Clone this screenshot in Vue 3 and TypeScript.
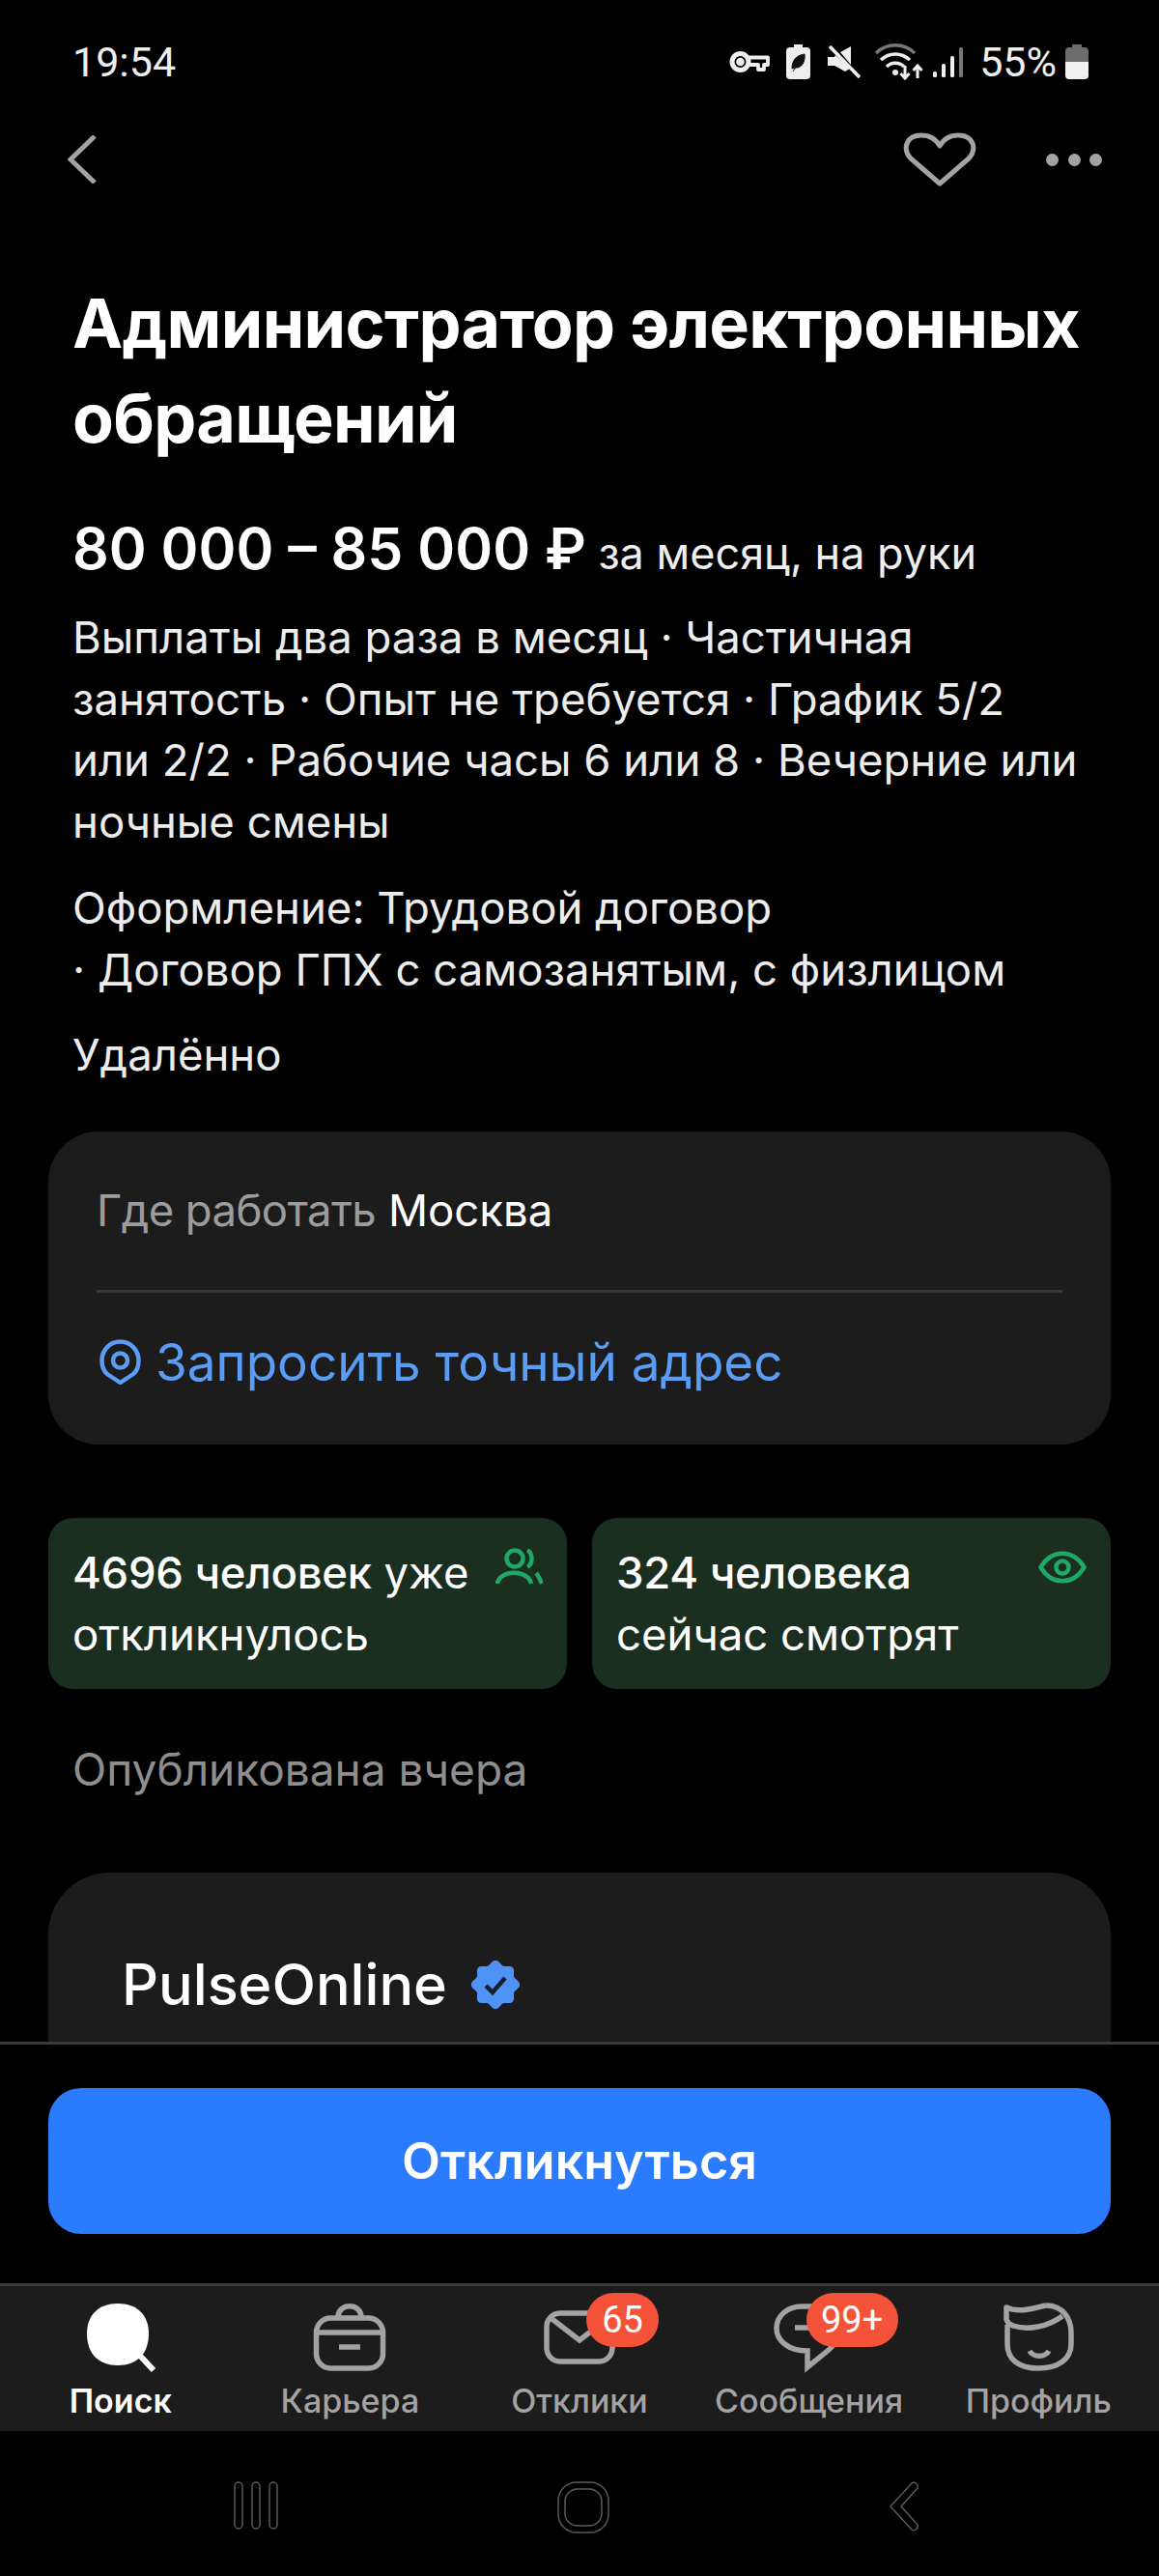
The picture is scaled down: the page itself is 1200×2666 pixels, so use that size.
<script setup lang="ts">
const badgePoints: string = Array.from({ length: 96 }, (_, i) => {
  const a = (i / 96) * Math.PI * 2
  const r = 23 + 2.2 * Math.cos(a * 8)
  return `${(25 + r * Math.sin(a)).toFixed(2)},${(25 - r * Math.cos(a)).toFixed(2)}`
}).join(' ')
</script>

<template>
  <div class="phone">
    <div class="status">
      <span class="time">19:54</span>
      <div class="status-right">
        <svg class="si key" width="42" height="24" viewBox="0 0 42 24" fill="none" stroke="#eee" stroke-width="5">
          <circle cx="11.500" cy="12" r="8.500" />
          <circle cx="11.500" cy="12" r="1.800" fill="#eee" />
          <path d="M20 7.500H40V15H36V20H30V15H20" stroke-width="3.800" stroke-linejoin="round" />
        </svg>
        <svg class="si leaf" width="25" height="36" viewBox="0 0 25 36">
          <path d="M8 0H17V3H21Q25 3 25 7V32Q25 36 21 36H4Q0 36 0 32V7Q0 3 4 3H8Z" fill="#eee" />
          <path d="M6 25C6 15 12 11 19 10C20 18 16 25 9 24ZM7 28L14 17" fill="#111" stroke="#111" stroke-width="1" />
        </svg>
        <svg class="si mute" width="34" height="34" viewBox="0 0 34 34">
          <path d="M0 12H7L8 10L23 24L18 27L7 21H0ZM13 7L24 1V20Z" fill="#eee" />
          <path d="M2 1L33 33" stroke="#eee" stroke-width="3.600" />
        </svg>
        <svg class="si wifi" width="50" height="38" viewBox="0 0 50 38" fill="none">
          <path d="M1 10C12 -1 30 -1 41 10" stroke="#777" stroke-width="3.400" />
          <path d="M6 17C15 9 27 9 36 17" stroke="#eee" stroke-width="3.400" />
          <path d="M12 24C17 19 25 19 30 24" stroke="#eee" stroke-width="3.400" />
          <circle cx="21" cy="30" r="3" fill="#eee" />
          <path d="M31 23V36M26.500 31L31 36L35.500 31M44 36V24M39.500 28L44 23L48.500 28" stroke="#eee" stroke-width="3" />
        </svg>
        <svg class="si signal" width="31" height="33" viewBox="0 0 31 33">
          <rect x="0" y="26" width="4" height="6" rx="1.500" fill="#eee" />
          <rect x="9" y="18" width="4" height="14" rx="1.500" fill="#eee" />
          <rect x="18" y="10" width="4" height="22" rx="1.500" fill="#eee" />
          <rect x="27" y="1" width="4" height="31" rx="1.500" fill="#777" />
        </svg>
        <span class="pct">55%</span>
        <svg class="si batt" width="24" height="36" viewBox="0 0 24 36">
          <path d="M7 0H17V3H20Q24 3 24 7V18H0V7Q0 3 4 3H7Z" fill="#6d6d6d" />
          <path d="M0 18H24V32Q24 36 20 36H4Q0 36 0 32Z" fill="#f0f0f0" />
        </svg>
      </div>
    </div>

    <div class="topbar">
      <svg width="30" height="50" viewBox="0 0 30 50" fill="none" stroke="#a3a3a3" stroke-width="5">
        <path d="M28 1L3 25L28 49" />
      </svg>
      <div class="top-actions">
        <svg width="76" height="56" viewBox="0 0 76 56" fill="none" stroke="#a3a3a3" stroke-width="5" stroke-linejoin="round">
          <path d="M38 53L8 27C-1 17 3 3 19 3C28 3 34 7 38 14C42 7 48 3 57 3C73 3 77 17 68 27Z" />
        </svg>
        <div class="dots"><i></i><i></i><i></i></div>
      </div>
    </div>

    <main class="content">
      <h1 class="title">Администратор электронных обращений</h1>
      <div class="price"><strong>80 000 – 85 000 ₽</strong> <span>за месяц, на руки</span></div>
      <p class="desc first">Выплаты два раза в месяц · Частичная<br />занятость · Опыт не требуется · График 5/2<br />или 2/2 · Рабочие часы 6 или 8 · Вечерние или<br />ночные смены</p>
      <p class="desc second">Оформление: Трудовой договор<br />· Договор ГПХ с самозанятым, с физлицом</p>
      <p class="desc third">Удалённо</p>

      <section class="place">
        <div class="where"><span class="muted">Где работать</span> Москва</div>
        <div class="rule"></div>
        <div class="link">
          <svg width="43" height="48" viewBox="0 0 43 48" fill="none" stroke="#5b9cf5" stroke-width="4.500">
            <path d="M21.500 45L8 36C3 32 2.500 27 2.500 22C2.500 11 11 2.500 21.500 2.500S40.500 11 40.500 22C40.500 27 40 32 35 36Z" stroke-linejoin="round" />
            <circle cx="21.500" cy="22" r="7.500" />
          </svg>
          <span>Запросить точный адрес</span>
        </div>
      </section>

      <section class="stats">
        <div class="stat">
          <div class="stat-text"><b>4696 человек</b> уже<br />откликнулось</div>
          <svg class="stat-ico" width="50" height="40" viewBox="0 0 50 40" fill="none" stroke="#20a866" stroke-width="4.500">
            <circle cx="21" cy="11" r="8.500" />
            <path d="M34 2.500C40 5 40 17 34 19.500" />
            <path d="M3 37C5 22 35 22 38 37" />
            <path d="M43 26C45 28 47 32 49 37" />
          </svg>
        </div>
        <div class="stat">
          <div class="stat-text"><b>324 человека</b><br />сейчас смотрят</div>
          <svg class="stat-ico eye" width="50" height="34" viewBox="0 0 50 34" fill="none" stroke="#20a866" stroke-width="4.500">
            <path d="M2.500 17C14 -2 36 -2 47.500 17C36 36 14 36 2.500 17Z" stroke-linejoin="round" />
            <circle cx="25" cy="17" r="6.500" />
          </svg>
        </div>
      </section>

      <p class="published">Опубликована вчера</p>

      <section class="company">
        <span class="company-name">PulseOnline</span>
        <svg class="verified" width="50" height="50" viewBox="0 0 50 50">
          <polygon :points="badgePoints" fill="#4f93f7" />
          <path d="M15 26L22 33L35 18" fill="none" stroke="#14202e" stroke-width="4.500" />
        </svg>
      </section>
    </main>

    <div class="action">
      <button class="cta" type="button">Откликнуться</button>
    </div>

    <nav class="tabs">
      <div class="tab active">
        <div class="tab-ico">
          <svg width="80" height="70" viewBox="0 0 80 70">
            <path d="M37 0C57 0 69 12 69 31C69 52 57 64 37 64C17 64 5 52 5 31C5 12 17 0 37 0Z" fill="#fff" />
            <path d="M60 54L74 69" stroke="#fff" stroke-width="6" />
          </svg>
        </div>
        <span>Поиск</span>
      </div>
      <div class="tab">
        <div class="tab-ico">
          <svg width="80" height="70" viewBox="0 0 80 70" fill="none" stroke="#a3a3a3" stroke-width="5.500">
            <rect x="5.500" y="15" width="69" height="52" rx="15" />
            <path d="M5 30H75" />
            <path d="M29 45H51" />
            <path d="M28 14C28 -1 52 -1 52 14" />
          </svg>
        </div>
        <span>Карьера</span>
      </div>
      <div class="tab">
        <div class="tab-ico">
          <svg width="80" height="70" viewBox="0 0 80 70" fill="none" stroke="#a3a3a3" stroke-width="5.500">
            <rect x="6" y="10" width="68" height="50" rx="14" />
            <path d="M9 14L40 38L71 14" />
          </svg>
          <span class="count mail">65</span>
        </div>
        <span>Отклики</span>
      </div>
      <div class="tab">
        <div class="tab-ico">
          <svg width="80" height="70" viewBox="0 0 80 70" fill="none" stroke="#a3a3a3" stroke-width="5.500">
            <path d="M32 3H46C60 3 72 12 72 24C72 36 66 43 60 48L38 66V49C18 49 6 38 6 26C6 12 18 3 32 3Z" />
            <path d="M25 25H46" />
          </svg>
          <span class="count msg">99+</span>
        </div>
        <span>Сообщения</span>
      </div>
      <div class="tab">
        <div class="tab-ico">
          <svg width="80" height="70" viewBox="0 0 80 70" fill="none" stroke="#a3a3a3" stroke-width="5.500" stroke-linejoin="round">
            <path d="M48 2C66 2 74 16 74 30V42C74 58 60 67 40 67C20 67 8 58 8 42V22" />
            <path d="M65 13C50 24 30 28 14 23C10 22 8 20 7 16V4C20 10 34 5 48 2" />
            <path d="M31 49C35 56 47 56 51 49" />
          </svg>
        </div>
        <span>Профиль</span>
      </div>
    </nav>

    <div class="sysnav">
      <svg width="46" height="50" viewBox="0 0 46 50" fill="none" stroke="#5a5a5a" stroke-width="1.500">
        <rect x="1" y="1" width="8" height="48" rx="4" />
        <rect x="19" y="1" width="8" height="48" rx="4" />
        <rect x="37" y="1" width="8" height="48" rx="4" />
      </svg>
      <svg width="54" height="54" viewBox="0 0 54 54" fill="none" stroke="#5a5a5a" stroke-width="1.500">
        <rect x="1" y="1" width="52" height="52" rx="19" />
        <rect x="8" y="8" width="38" height="38" rx="13" />
      </svg>
      <svg width="32" height="52" viewBox="0 0 32 52" fill="none" stroke="#5a5a5a" stroke-width="1.500" stroke-linejoin="round">
        <path d="M24 2C27 0 31 3 30 7L13 26L30 45C31 49 27 52 24 50L2 26Z" />
      </svg>
    </div>
  </div>
</template>

<style>
html, body { margin: 0; background: #000; }
</style>

<style scoped>
.phone {
  width: 1200px;
  height: 2666px;
  background: #000;
  color: #fff;
  display: flex;
  flex-direction: column;
  overflow: hidden;
  font-family: Inter, "Liberation Sans", sans-serif;
}
.status {
  flex: none;
  height: 110px;
  box-sizing: border-box;
  padding: 38px 73px 0 75px;
  display: flex;
  justify-content: space-between;
  align-items: flex-start;
}
.time, .pct {
  font-family: Roboto, sans-serif;
  font-size: 43px;
  line-height: 52px;
  color: #eee;
}
.status-right { display: flex; align-items: center; height: 52px; }
.si { display: block; }
.leaf { margin-left: 17px; }
.mute { margin-left: 18px; }
.wifi { margin-left: 15px; }
.signal { margin-left: 10px; }
.pct { margin-left: 17px; }
.batt { margin-left: 9px; }
.topbar {
  flex: none;
  height: 110px;
  box-sizing: border-box;
  padding: 0 59px 0 70px;
  display: flex;
  justify-content: space-between;
  align-items: center;
}
.top-actions { display: flex; align-items: center; gap: 72px; }
.dots { display: flex; gap: 9.500px; }
.dots i { width: 13px; height: 13px; border-radius: 50%; background: #a3a3a3; display: block; }
.content {
  flex: 1;
  min-height: 0;
  overflow: hidden;
  padding: 66px 50px 0;
}
.title {
  margin: 0 25px;
  font-size: 70px;
  line-height: 98px;
  font-weight: 700;
  letter-spacing: -0.700px;
}
.price {
  margin: 46px 25px 0;
  line-height: 80px;
  white-space: nowrap;
}
.price strong { font-size: 59px; font-weight: 600; }
.price span { font-size: 45px; margin-left: 8px; color: #eee; }
.desc {
  margin: 0 25px;
  font-size: 45.500px;
  line-height: 63.500px;
  color: #ececec;
  white-space: nowrap;
}
.first { margin-top: 5px; }
.second { margin-top: 26px; }
.third { margin-top: 25px; }
.place {
  margin-top: 47px;
  background: #1c1c1c;
  border-radius: 52px;
  padding: 52px 50px 55px;
}
.where { font-size: 45.500px; line-height: 60px; color: #fff; }
.muted { color: #9c9c9c; letter-spacing: -0.600px; }
.rule { height: 3px; background: #353535; margin-top: 52px; }
.link {
  margin-top: 42px;
  display: flex;
  align-items: center;
  gap: 15px;
  color: #5b9cf5;
  font-size: 53px;
  line-height: 60px;
  height: 60px;
  padding-left: 3px;
}
.stats {
  margin-top: 76px;
  display: grid;
  grid-template-columns: 1fr 1fr;
  gap: 26px;
}
.stat {
  height: 177px;
  box-sizing: border-box;
  padding: 25px 25px 0 25px;
  background: #1a2f20;
  border-radius: 26px;
  display: flex;
  justify-content: space-between;
  align-items: flex-start;
}
.stat-text { font-size: 45.500px; line-height: 64px; white-space: nowrap; }
.stat-text b { font-weight: 550; letter-spacing: -0.300px; }
.stat-ico { margin-top: 6px; }
.eye { margin-top: 9px; }
.published {
  margin: 53px 25px 0;
  font-size: 46px;
  line-height: 60px;
  color: #8e8e8e;
}
.company {
  margin-top: 77px;
  height: 400px;
  box-sizing: border-box;
  padding: 85px 76px 0;
  background: #1c1c1c;
  border-radius: 64px;
  display: flex;
  align-items: flex-start;
  gap: 25px;
}
.company-name { font-size: 59.300px; line-height: 62px; font-weight: 550; }
.verified { margin-top: 6px; }
.action {
  flex: none;
  height: 250px;
  box-sizing: border-box;
  border-top: 3px solid #3a3a3a;
  padding: 45px 50px 0;
}
.cta {
  display: block;
  width: 100%;
  height: 151px;
  border: 0;
  border-radius: 34px;
  background: #2b7bff;
  color: #fff;
  font: 600 52px Inter, "Liberation Sans", sans-serif;
}
.tabs {
  flex: none;
  height: 153px;
  box-sizing: border-box;
  border-top: 3px solid #3a3a3a;
  background: #1c1c1c;
  padding: 18px 6px 0;
  display: grid;
  grid-template-columns: repeat(5, 1fr);
}
.tab {
  display: flex;
  flex-direction: column;
  align-items: center;
  font-size: 34px;
  line-height: 40px;
  color: #a3a3a3;
  font-weight: 500;
}
.tab.active { color: #fff; font-weight: 600; }
.tab-ico { position: relative; width: 80px; height: 70px; margin-bottom: 11px; }
.tab-ico svg { display: block; overflow: visible; }
.count {
  position: absolute;
  top: -11px;
  height: 56px;
  border-radius: 28px;
  background: #f4533a;
  color: #fff;
  font: 400 38px/56px Roboto, sans-serif;
  text-align: center;
}
.mail { left: 47px; width: 75px; }
.msg { left: 37px; width: 95px; }
.sysnav {
  flex: none;
  height: 150px;
  box-sizing: border-box;
  padding: 52px 248px 0 242px;
  display: flex;
  justify-content: space-between;
  align-items: flex-start;
}
</style>
